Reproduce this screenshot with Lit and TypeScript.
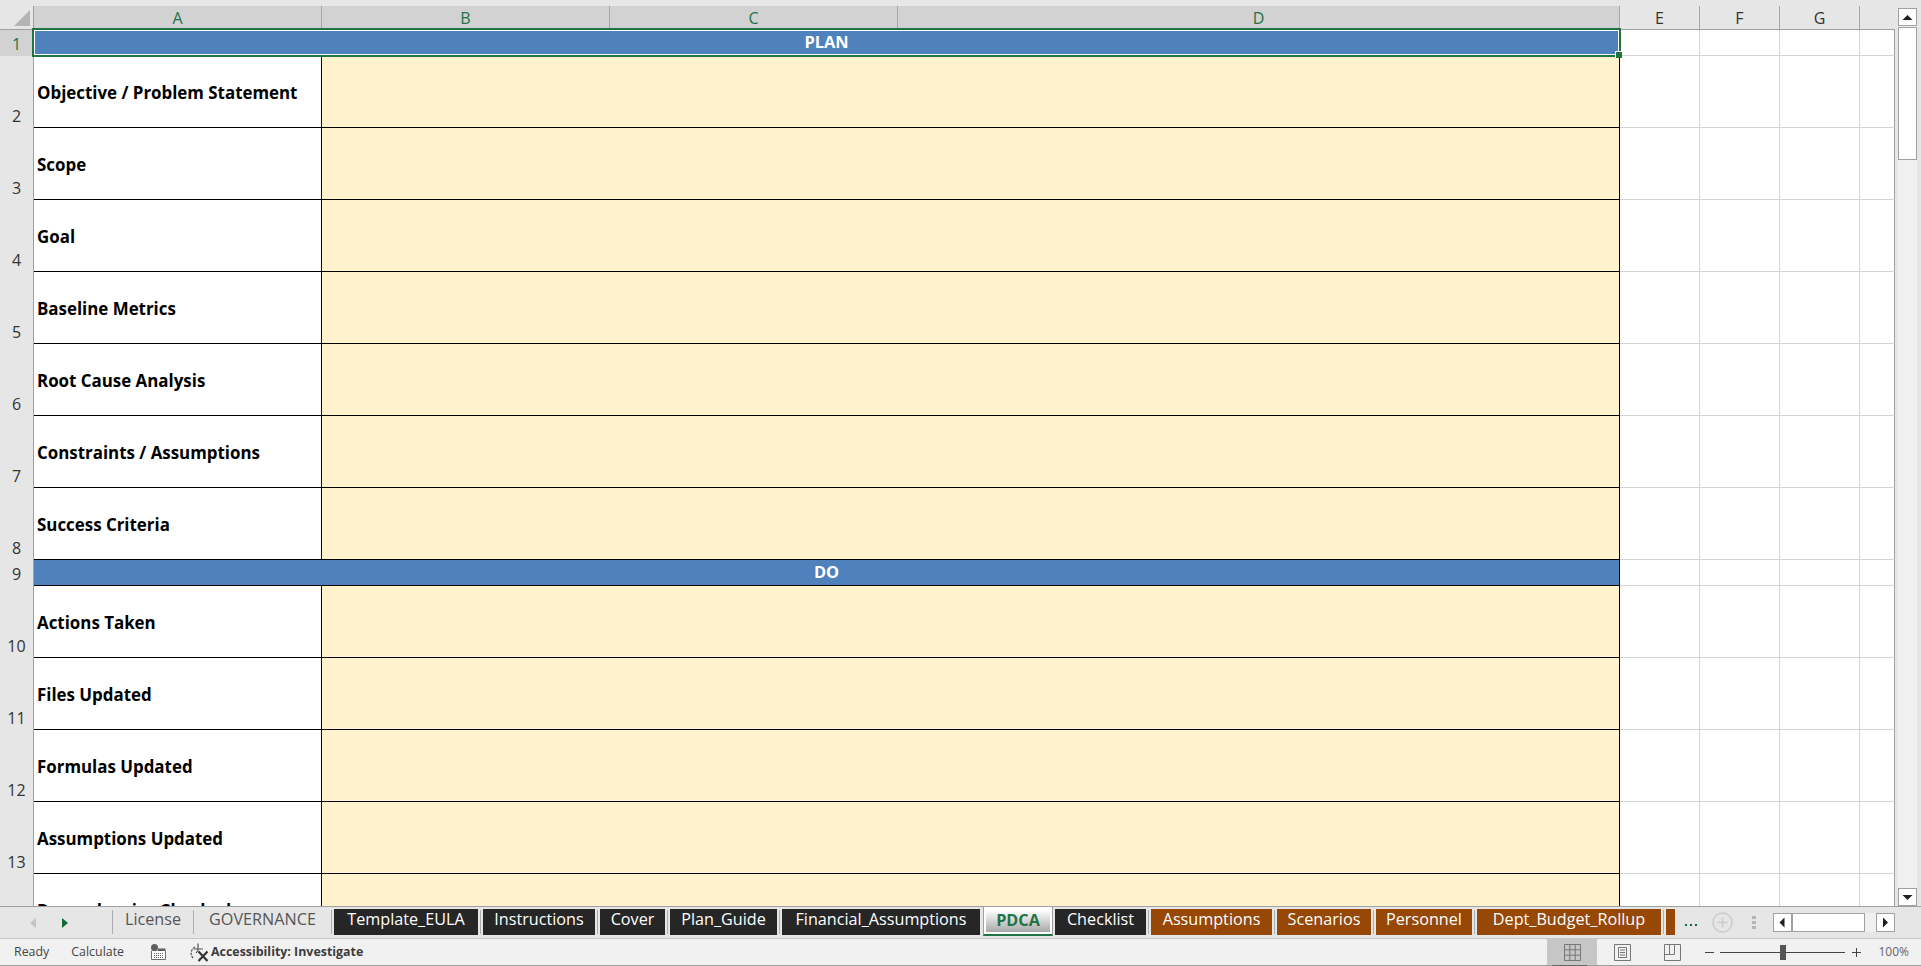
import { LitElement, html, css } from "lit";
import { customElement } from "lit/decorators.js";
import { classMap } from "lit/directives/class-map.js";

type Row = { n: number; label: string; band?: boolean };
const rows: Row[] = [
  { n: 1, label: "PLAN", band: true },
  { n: 2, label: "Objective / Problem Statement" },
  { n: 3, label: "Scope" },
  { n: 4, label: "Goal" },
  { n: 5, label: "Baseline Metrics" },
  { n: 6, label: "Root Cause Analysis" },
  { n: 7, label: "Constraints / Assumptions" },
  { n: 8, label: "Success Criteria" },
  { n: 9, label: "DO", band: true },
  { n: 10, label: "Actions Taken" },
  { n: 11, label: "Files Updated" },
  { n: 12, label: "Formulas Updated" },
  { n: 13, label: "Assumptions Updated" },
  { n: 14, label: "Dependencies Checked" },
];

type Tab = { name: string; w: number; kind: "plain" | "dark" | "brown" | "active"; sep: boolean };
const tabs: Tab[] = [
  { name: "License", w: 76, kind: "plain", sep: true },
  { name: "GOVERNANCE", w: 133, kind: "plain", sep: true },
  { name: "Template_EULA", w: 144, kind: "dark", sep: true },
  { name: "Instructions", w: 112, kind: "dark", sep: true },
  { name: "Cover", w: 65, kind: "dark", sep: true },
  { name: "Plan_Guide", w: 107, kind: "dark", sep: true },
  { name: "Financial_Assumptions", w: 198, kind: "dark", sep: false },
  { name: "PDCA", w: 70, kind: "active", sep: false },
  { name: "Checklist", w: 91, kind: "dark", sep: true },
  { name: "Assumptions", w: 121, kind: "brown", sep: true },
  { name: "Scenarios", w: 94, kind: "brown", sep: true },
  { name: "Personnel", w: 96, kind: "brown", sep: true },
  { name: "Dept_Budget_Rollup", w: 184, kind: "brown", sep: true },
  { name: "", w: 9, kind: "brown", sep: false },
];

@customElement("app-root")
export class AppRoot extends LitElement {
  static styles = css`
    :host {
      display: block;
      width: 1921px;
      height: 966px;
      overflow: hidden;
      background: #e6e6e6;
      font-family: "Open Sans", "Noto Sans", "Liberation Sans", sans-serif;
    }
    .app { display: flex; flex-direction: column; height: 966px; }

    .sheet { display: flex; height: 906px; overflow: hidden; flex: none; }
    .grid {
      position: relative;
      flex: none;
      display: grid;
      width: 1895px;
      grid-template-columns: 34px 288px 288px 288px 722px 80px 80px 80px 35px;
      grid-template-rows: 6px 24px 26px repeat(7, 72px) 26px repeat(5, 72px);
      align-self: flex-start;
    }
    .grid > div { box-sizing: border-box; min-width: 0; }
    .strip { grid-column: 1 / -1; background: #e6e6e6; }
    .corner {
      background: #e6e6e6;
      border-right: 1px solid #9f9f9f;
      border-bottom: 1px solid #9f9f9f;
      display: flex;
      align-items: flex-end;
      padding: 0 0 3px 14px;
    }
    .corner svg { display: block; }
    .colh {
      display: flex;
      align-items: center;
      justify-content: center;
      background: #e6e6e6;
      color: #333;
      font-size: 16px;
      line-height: 21px;
      padding-top: 1px;
      border-right: 1px solid #a6a6a6;
      border-bottom: 1px solid #9f9f9f;
    }
    .colh.sel { background: #d2d2d2; color: #217346; }
    .colh.last { border-right: none; }
    .rowh {
      display: flex;
      align-items: flex-end;
      justify-content: center;
      background: #e6e6e6;
      color: #333;
      font-size: 16px;
      line-height: 21px;
      padding-bottom: 1px;
      border-right: 1px solid #9f9f9f;
    }
    .rowh.sel { background: #d2d2d2; color: #217346; }
    .label {
      display: flex;
      align-items: center;
      padding: 1px 0 0 3px;
      background: #fff;
      color: #000;
      font-weight: 700;
      font-size: 16.9px;
      white-space: nowrap;
      border-right: 1px solid #000;
      border-bottom: 1px solid #000;
    }
    .fill {
      grid-column: span 3;
      background: #fff2cc;
      border-right: 1px solid #000;
      border-bottom: 1px solid #000;
    }
    .band {
      grid-column: span 4;
      display: flex;
      align-items: center;
      justify-content: center;
      background: #4f81bd;
      color: #fff;
      font-weight: 700;
      font-size: 16.4px;
      line-height: 22px;
      padding-bottom: 1px;
      border-right: 1px solid #000;
      border-bottom: 1px solid #000;
    }
    .blank { background: #fff; border-right: 1px solid #d4d4d4; border-bottom: 1px solid #d4d4d4; }
    .blank.edge { border-right-color: #a0a0a0; }
    .selection {
      position: absolute;
      left: 32px;
      top: 28px;
      width: 1589px;
      height: 29px;
      box-sizing: border-box;
      border: 2px solid #217346;
      box-shadow: inset 0 0 0 1px #fff;
    }
    .handle {
      position: absolute;
      right: -3px;
      bottom: -3px;
      width: 7px;
      height: 7px;
      box-sizing: border-box;
      background: #217346;
      border-left: 1px solid #fff;
      border-top: 1px solid #fff;
    }

    .vscroll {
      flex: 1;
      display: flex;
      flex-direction: column;
      padding: 8px 4px 0 3px;
      box-sizing: border-box;
      height: 906px;
    }
    .track { flex: 1; display: flex; flex-direction: column; background: #f0f0f0; }
    .sbtn {
      box-sizing: border-box;
      flex: none;
      display: flex;
      align-items: center;
      justify-content: center;
      background: #fff;
      border: 1px solid #a0a0a0;
    }
    .vbtn { width: 19px; height: 18px; }
    .vthumb { box-sizing: border-box; width: 19px; height: 133px; margin-top: 1px; background: #fff; border: 1px solid #a0a0a0; }
    .spacer { flex: 1; }

    .tabbar {
      flex: none;
      box-sizing: border-box;
      height: 33px;
      display: flex;
      align-items: flex-start;
      background: #e6e6e6;
      border-top: 1px solid #a0a0a0;
      border-bottom: 1px solid #c6c6c6;
    }
    .nav { flex: none; width: 110px; height: 31px; display: flex; align-items: center; gap: 26px; padding-left: 30px; box-sizing: border-box; }
    .nav svg { display: block; }
    .tabs { flex: none; display: flex; align-items: flex-start; padding-top: 2px; }
    .sep { flex: none; width: 1px; height: 24px; margin: 1px 2px 0 2px; background: #adadad; }
    .tab {
      flex: none;
      box-sizing: border-box;
      height: 26px;
      display: flex;
      align-items: flex-start;
      justify-content: center;
      overflow: hidden;
      white-space: nowrap;
      font-size: 16.2px;
      line-height: 20px;
    }
    .tab.plain { color: #555; }
    .tab.dark { background: #262626; color: #fff; }
    .tab.brown { background: #974706; color: #fff; }
    .tab.active {
      height: 29px;
      margin: -2px 2px 0 3px;
      padding: 2px 2px 2px;
      background: #fff;
      border-left: 1px solid #a0a0a0;
      border-right: 1px solid #a0a0a0;
      border-bottom: 2px solid #217346;
      align-items: stretch;
    }
    .tab.active span {
      flex: 1;
      display: flex;
      align-items: flex-start;
      justify-content: center;
      background: linear-gradient(#ffffff, #a8a8a8);
      color: #217346;
      font-weight: 700;
      margin-top: 1px;
    }
    .more { flex: none; display: flex; gap: 3px; margin: 17px 0 0 10px; }
    .more i { display: block; width: 2px; height: 2px; background: #0e6b3a; }
    .plus { flex: none; display: block; margin: 5px 0 0 15px; }
    .kebab { flex: none; display: flex; flex-direction: column; gap: 2px; margin: 9px 0 0 19px; }
    .kebab i { display: block; width: 4px; height: 3px; background: #b4b4b4; }
    .hscroll { flex: none; display: flex; margin: 6px 0 0 17px; height: 19px; background: #f0f0f0; width: 122px; }
    .hbtn { width: 19px; height: 19px; }
    .hthumb { box-sizing: border-box; width: 73px; height: 19px; background: #fff; border: 1px solid #a0a0a0; }

    .status {
      flex: none;
      box-sizing: border-box;
      height: 27px;
      display: flex;
      align-items: center;
      background: #f1f1f1;
      border-bottom: 1px solid #a0a0a0;
      font-size: 12.4px;
      line-height: 17px;
      color: #444;
      white-space: nowrap;
    }
    .status svg { display: block; flex: none; }
    .status span { margin-bottom: 2px; }
    .ready { margin-left: 14px; }
    .calc { margin-left: 22px; }
    .calicon { margin-left: 26px; }
    .accicon { margin-left: 23px; }
    .acc { margin-left: 2px; font-weight: 700; color: #3c3c3c; }
    .views { margin-left: auto; display: flex; align-items: center; height: 26px; }
    .view { box-sizing: border-box; width: 50px; height: 26px; display: flex; align-items: center; justify-content: center; }
    .view.on { position: relative; background: #c6c6c6; }
    .view.on::after { content: ""; position: absolute; left: 5px; right: 10px; bottom: -1px; height: 1px; background: #666; }
    .zoom { display: flex; align-items: center; margin: 0 12px 0 0; }
    .zminus { display: block; width: 9px; height: 1px; background: #444; margin: 0 6px 0 8px; }
    .zline { position: relative; width: 125px; height: 1px; background: #444; }
    .zthumb { position: absolute; left: 60px; top: -7px; width: 6px; height: 15px; background: #555; }
    .zplus { display: block; margin-left: 7px; }
    .pct { margin-left: 17px; color: #666; font-size: 12px; }
  `;

  private chev(dir: "up" | "down" | "left" | "right") {
    const d = {
      up: "M0.5 8 L5.5 3 L10.5 8 Z",
      down: "M0.5 3 L5.5 8 L10.5 3 Z",
      left: "M7.5 0.5 L2.5 5.5 L7.5 10.5 Z",
      right: "M3 0.5 L8 5.5 L3 10.5 Z",
    }[dir];
    return html`<svg width="11" height="11" viewBox="0 0 11 11"><path d=${d} fill="#1f1f1f"></path></svg>`;
  }

  private renderRow(r: Row) {
    const sel = r.n === 1;
    return html`
      <div class=${classMap({ rowh: true, sel })}>${r.n}</div>
      ${r.band
        ? html`<div class="band">${r.label}</div>`
        : html`<div class="label">${r.label}</div><div class="fill"></div>`}
      <div class="blank"></div><div class="blank"></div><div class="blank"></div>
      <div class="blank edge"></div>
    `;
  }

  private renderTab(t: Tab) {
    const cls = { tab: true, [t.kind]: true };
    const w = `width:${t.w}px`;
    return html`
      ${t.kind === "active"
        ? html`<div class=${classMap(cls)} style=${w}><span>${t.name}</span></div>`
        : html`<div class=${classMap(cls)} style=${w}>${t.name}</div>`}
      ${t.sep ? html`<div class="sep"></div>` : ""}
    `;
  }

  render() {
    return html`
      <div class="app">
        <div class="sheet">
          <div class="grid">
            <div class="strip"></div>
            <div class="corner">
              <svg width="16" height="16" viewBox="0 0 16 16"><path d="M16 0 V16 H0 Z" fill="#b4b4b4"></path></svg>
            </div>
            ${["A", "B", "C", "D"].map((c) => html`<div class="colh sel">${c}</div>`)}
            ${["E", "F", "G"].map((c) => html`<div class="colh">${c}</div>`)}
            <div class="colh last"></div>
            ${rows.map((r) => this.renderRow(r))}
            <div class="selection"><div class="handle"></div></div>
          </div>
          <div class="vscroll">
            <div class="track">
              <div class="sbtn vbtn">${this.chev("up")}</div>
              <div class="vthumb"></div>
              <div class="spacer"></div>
              <div class="sbtn vbtn">${this.chev("down")}</div>
            </div>
          </div>
        </div>

        <div class="tabbar">
          <div class="nav">
            <svg width="6" height="10" viewBox="0 0 6 10"><path d="M6 0 L0 5 L6 10 Z" fill="#c4c4c4"></path></svg>
            <svg width="6" height="10" viewBox="0 0 6 10"><path d="M0 0 L6 5 L0 10 Z" fill="#0e6b3a"></path></svg>
          </div>
          <div class="tabs">
            <div class="sep"></div>
            ${tabs.map((t) => this.renderTab(t))}
          </div>
          <div class="more"><i></i><i></i><i></i></div>
          <svg class="plus" width="21" height="21" viewBox="0 0 21 21">
            <circle cx="10.5" cy="10.5" r="9.5" fill="none" stroke="#cbcbcb" stroke-width="1.5"></circle>
            <path d="M10.5 5.5 V15.5 M5.5 10.5 H15.5" stroke="#cbcbcb" stroke-width="1.5" fill="none"></path>
          </svg>
          <div class="kebab"><i></i><i></i><i></i></div>
          <div class="hscroll">
            <div class="sbtn hbtn">${this.chev("left")}</div>
            <div class="hthumb"></div>
            <div class="spacer"></div>
            <div class="sbtn hbtn">${this.chev("right")}</div>
          </div>
        </div>

        <div class="status">
          <span class="ready">Ready</span>
          <span class="calc">Calculate</span>
          <svg class="calicon" width="16" height="16" viewBox="0 0 16 16">
            <circle cx="4.5" cy="3.5" r="3.5" fill="#5f5f5f"></circle>
            <path d="M8 4.5 H15.5 V7.5 H1.5 V6.5 H8 Z" fill="#5f5f5f"></path>
            <path d="M1.5 7 V15.5 H15.5 V7" fill="#fff" stroke="#6b6b6b" stroke-width="1"></path>
            <path d="M4 9.5 H14 M4 11.5 H14 M4 13.5 H14" stroke="#5f5f5f" stroke-width="1" stroke-dasharray="1 1"></path>
          </svg>
          <svg class="accicon" width="20" height="19" viewBox="0 0 20 19">
            <path d="M6 4 A7 7 0 0 0 4.5 15.5" fill="none" stroke="#555" stroke-width="1.2" stroke-dasharray="2.5 1"></path>
            <path d="M9 0.5 V7.5 M4.5 6 H14 M9 7.5 L7 10" fill="none" stroke="#555" stroke-width="1.2"></path>
            <path d="M9.5 8.5 L18.5 18 M18.5 8.5 L9.5 18" fill="none" stroke="#333" stroke-width="2.2"></path>
          </svg>
          <span class="acc">Accessibility: Investigate</span>
          <div class="views">
            <div class="view on">
              <svg width="17" height="17" viewBox="0 0 17 17"><path d="M.5 .5 H16.5 V16.5 H.5 Z M5.8 .5 V16.5 M11.2 .5 V16.5 M.5 5.8 H16.5 M.5 11.2 H16.5" fill="none" stroke="#777" stroke-width="1"></path></svg>
            </div>
            <div class="view">
              <svg width="17" height="17" viewBox="0 0 17 17"><path d="M.5 .5 H16.5 V16.5 H.5 Z" fill="none" stroke="#777" stroke-width="1"></path><path d="M4.5 3.5 H12.5 V13.5 H4.5 Z M6 6 H11 M6 8.5 H11 M6 11 H11" fill="none" stroke="#777" stroke-width="1"></path></svg>
            </div>
            <div class="view">
              <svg width="17" height="17" viewBox="0 0 17 17"><path d="M.5 .5 H16.5 V16.5 H.5 Z M.5 10.5 H10.5 V.5 M5.5 .5 V10.5" fill="none" stroke="#777" stroke-width="1"></path></svg>
            </div>
          </div>
          <div class="zoom">
            <i class="zminus"></i>
            <div class="zline"><div class="zthumb"></div></div>
            <svg class="zplus" width="9" height="9" viewBox="0 0 9 9"><path d="M4.5 0 V9 M0 4.5 H9" stroke="#444" stroke-width="1"></path></svg>
            <span class="pct">100%</span>
          </div>
        </div>
      </div>
    `;
  }
}
